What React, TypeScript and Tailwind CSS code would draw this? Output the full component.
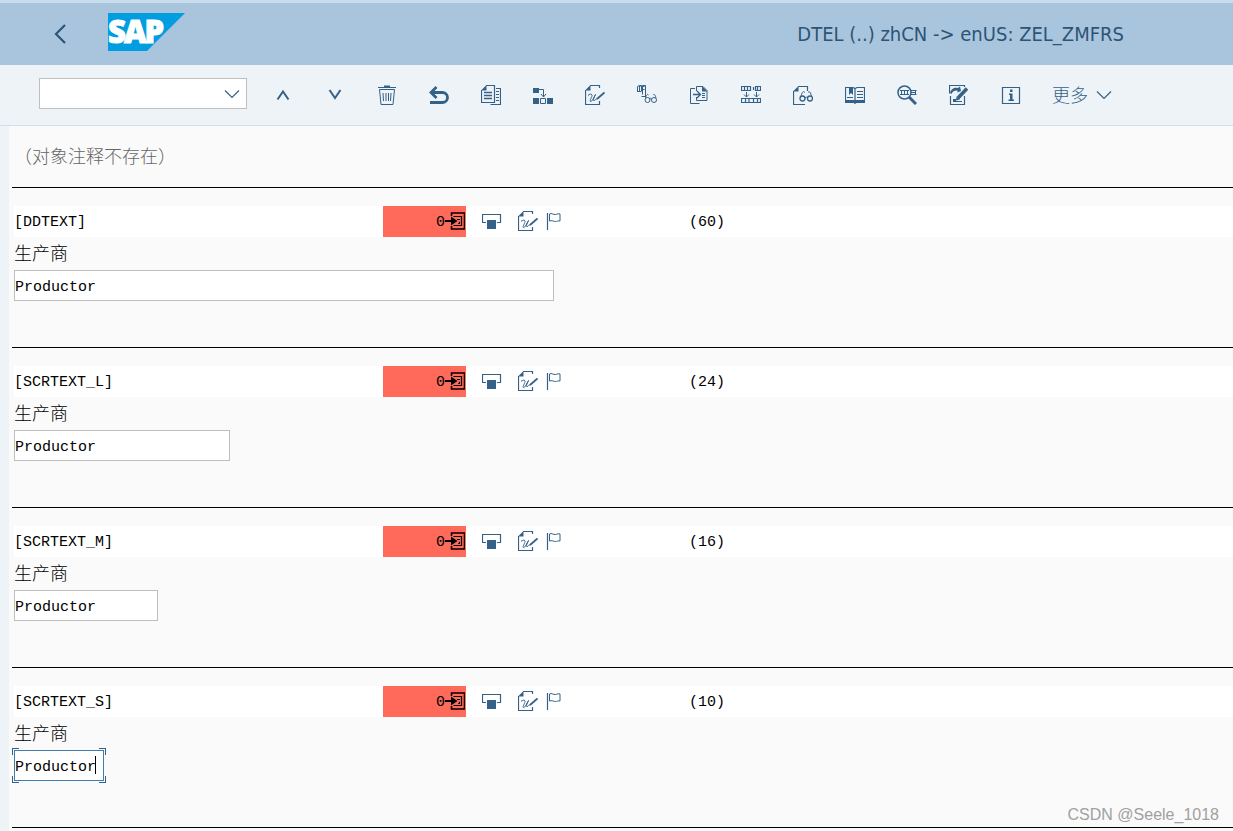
import { useState, type ReactNode } from "react"
import clsx from "clsx"

type IconProps = { className?: string }

function Svg({ children, className }: { children: ReactNode; className?: string }) {
  return (
    <svg
      viewBox="0 0 20 20"
      className={clsx("h-5 w-5 shrink-0", className)}
      fill="none"
      stroke="currentColor"
      strokeWidth="1"
      aria-hidden="true"
    >
      {children}
    </svg>
  )
}

const UpIcon = () => (
  <Svg>
    <path d="M4.5 14.5 10 6.5l5.5 8" strokeWidth="2" />
  </Svg>
)

const DownIcon = () => (
  <Svg>
    <path d="M4.5 5 10 13l5.5-8" strokeWidth="2" />
  </Svg>
)

const TrashIcon = () => (
  <Svg>
    <path d="M7 2V.5h6V2z" fill="currentColor" stroke="none" />
    <path d="M1 2.5h18M2.5 4.5h15L16 19.5H4z" />
    <path d="m6 8 .5 8M9 8v8M11.5 8v8M14 8l-.5 8" />
  </Svg>
)

const UndoIcon = () => (
  <Svg>
    <path d="M7.5 2 2 7.5 7.500 13M3 7.500h10.500a5 5 0 0 1 0 10H1" strokeWidth="2.800" />
  </Svg>
)

const CopyIcon = () => (
  <Svg>
    <path d="M5 .5h8.500v17H.5V5" strokeWidth="1.200" />
    <path d="M0 5.500 5.500 0v5.500z" fill="currentColor" stroke="none" />
    <path d="M3 7.500h8M3 10.500h8M3 13.500h8" strokeWidth="1.300" />
    <path d="M15 3.500h4.500v16h-10M15 6.500h3M15 9.500h3M15 12.500h3M15 15.500h3" strokeWidth="1.200" />
  </Svg>
)

const HierarchyIcon = () => (
  <Svg>
    <path d="M0 3h6v5H0zM0 13h6v6H0zM14 13h6v6h-6z" fill="currentColor" stroke="none" />
    <path d="M7.500 13.500h5v5h-5zM6 4.500h4.500v7M8 9l2.500 3L13 9" />
  </Svg>
)

const SignDocIcon = ({ className }: IconProps) => (
  <Svg className={className}>
    <path d="M5 .5h9.500V3M.5 5v14.500h14V16" strokeWidth="1.200" />
    <path d="M0 5.500 5.500 0v5.500z" fill="currentColor" stroke="none" />
    <path d="M3 10.500c1.500-1.500 3.500-2 4-.5s-3 6-1.500 6.500S9 12 10.500 9.500C9 13 7.500 15.500 9 15.500s1.500-2 3-1.500" />
    <path d="m12 14 7.500-6.500" strokeWidth="1.800" />
  </Svg>
)

const CheckTextIcon = () => (
  <Svg>
    <path d="M.5 7V1.500l2-1v6M2.500.5h2v6M5.500 9.500v-9h3v11h-4M1 6.500h3M3.500 1.500h4M5.500 4.500h2M7 11.500h2" />
    <circle cx="10.500" cy="15" r="2.500" />
    <circle cx="17" cy="15" r="2.500" />
    <path d="M8.500 13c1-4 2-4 3-3M19 13c-1-4-2-4-3-3M12.500 14c1-1 1.500-1 2 0" />
  </Svg>
)

const ImportDocIcon = () => (
  <Svg>
    <path d="M7.500 6V1.500H14l4 4v10H12M7.500 12v3.500H12M6 3.500H1.500v15h9" />
    <path d="M13 1v5.500h5.500z" fill="currentColor" stroke="none" />
    <path d="M4 9.500h7.500M8 6l3.500 3.500L8 13" strokeWidth="1.300" />
    <path d="M13 8.500h3M13 10.500h3M13 12.500h3" />
  </Svg>
)

const SplitRowsIcon = () => (
  <Svg>
    <path d="M.5 1.500h9v4h-9zM14.500 1.500h5v4h-5zM3.500 2v3M6.500 2v3M16.500 2v3M12.500 2v3M.5 13.500h19v4H.5zM4.500 14v3M8 14v3M12.500 14v3M16.500 14v3" strokeWidth="1.200" />
    <path d="M5.500 7v5M3 9.500 5.500 12 8 9.500M15.500 7v5M13 9.500l2.500 2.500L18 9.500" />
  </Svg>
)

const DisplayDocIcon = () => (
  <Svg>
    <path d="M5 1.500h9.500V6M.5 6v13.500H12" strokeWidth="1.200" />
    <path d="M0 6.500 5.500 1v5.500z" fill="currentColor" stroke="none" />
    <circle cx="9.500" cy="13.500" r="2.500" strokeWidth="1.300" />
    <circle cx="17" cy="13.500" r="2.500" strokeWidth="1.300" />
    <path d="M8 11.500c1-5 2.500-5.500 4-4M18.500 11.500c-1-5-2-5.500-3.500-4M12 13c1-1 1.500-1 2.500 0" />
  </Svg>
)

const BookIcon = () => (
  <Svg>
    <path d="M.5 2.500H8l2 1 2-1h7.500v13H.5zM10 3v13" strokeWidth="1.200" />
    <path d="M0 15h20v3h-8.500l-1.500 1-1.500-1H0z" fill="currentColor" stroke="none" />
    <path d="M4 2h4v8L6 8l-2 2z" fill="currentColor" stroke="none" />
    <path d="M12 6.500h6M12 9.500h6M12 12.500h6M2 12.500h6" />
  </Svg>
)

const SearchTermIcon = () => (
  <Svg>
    <circle cx="7.500" cy="7.500" r="6.500" strokeWidth="1.500" />
    <path d="m12 12 7 7" strokeWidth="3" />
    <path d="M3 5.500h9M3 9.500h9M4.500 6v3M7.500 6v3M10.500 6v3M14 5.500h5.500M14 9.500h5.500M14 7.500h4M18.500 6v3" />
  </Svg>
)

const EditNoteIcon = () => (
  <Svg>
    <path d="M3 .5h12.500V2M1.500 11v8.500h14V11M.5 8.500V.5H3" strokeWidth="1.200" />
    <path d="M1 8c1-4 4-6 8-5l2-1.500L12 6 8.500 7.500V5.500C5.500 5 3 7 2.500 9z" fill="currentColor" stroke="none" />
    <path d="m9 13 9-9.500" strokeWidth="3.500" />
    <path d="m7 15.500.5-4 3.500 3zM4 14h3v3H4z" fill="currentColor" stroke="none" />
    <path d="M4 16.500h9" />
  </Svg>
)

const InfoIcon = () => (
  <Svg>
    <path d="M1.500 2.500h17v16h-17z" strokeWidth="1.200" />
    <path d="M9 4.500h2.500V7H9zM8 8.500h3.500v6H13V16H7.500v-1.500H9V10H8z" fill="currentColor" stroke="none" />
  </Svg>
)

const ChevronIcon = ({ className }: IconProps) => (
  <svg
    viewBox="0 0 16 10"
    className={clsx("h-[10px] w-4 shrink-0", className)}
    fill="none"
    stroke="currentColor"
    strokeWidth="1.200"
    aria-hidden="true"
  >
    <path d="m1 1.500 7 7 7-7" />
  </svg>
)

const EnterIcon = () => (
  <Svg>
    <path d="M6.500 5V2h13v16h-13v-3" strokeWidth="1.600" />
    <path d="M8.500 5.500h8v9h-8M12 8.500h3" strokeWidth="1.200" />
    <path d="M0 9h6V5.500l6.500 4.500L6 14.500V11H0zM15 10v3h-2z" fill="currentColor" stroke="none" />
  </Svg>
)

const ProposalIcon = () => (
  <Svg>
    <path d="M4 11.500H.5v-8h18v8H15" strokeWidth="1.200" />
    <path d="M5 9h9v9H5z" fill="currentColor" stroke="none" />
  </Svg>
)

const FlagIcon = () => (
  <Svg>
    <path d="M1.500 2v17" strokeWidth="1.200" />
    <path d="M3.500 3c2-1.500 4 1 6 .5s3-1 4.500-.5v7c-2-.5-3 .5-4.500.5s-4-1.500-6-.5z" />
  </Svg>
)

const tools = [
  { name: "Previous", Icon: UpIcon },
  { name: "Next", Icon: DownIcon },
  { name: "Delete", Icon: TrashIcon },
  { name: "Undo", Icon: UndoIcon },
  { name: "Copy", Icon: CopyIcon },
  { name: "Hierarchy", Icon: HierarchyIcon },
  { name: "Edit text", Icon: SignDocIcon },
  { name: "Check text", Icon: CheckTextIcon },
  { name: "Import", Icon: ImportDocIcon },
  { name: "Split rows", Icon: SplitRowsIcon },
  { name: "Display document", Icon: DisplayDocIcon },
  { name: "Glossary", Icon: BookIcon },
  { name: "Search term", Icon: SearchTermIcon },
  { name: "Edit note", Icon: EditNoteIcon },
  { name: "Information", Icon: InfoIcon },
]

const fields = [
  { key: "DDTEXT", source: "生产商", target: "Productor", max: 60 },
  { key: "SCRTEXT_L", source: "生产商", target: "Productor", max: 24 },
  { key: "SCRTEXT_M", source: "生产商", target: "Productor", max: 16 },
  { key: "SCRTEXT_S", source: "生产商", target: "Productor", max: 10, active: true },
]

const CHAR_WIDTH = 9

function Header() {
  return (
    <header className="flex h-[65px] items-start border-t-[3px] border-[#c9dcec] bg-[#a9c5de] pt-[10px] text-[#2d5475]">
      <button type="button" aria-label="Back" className="ml-[50px] flex h-[42px] w-5 items-center justify-center">
        <Svg>
          <path d="M15 1 6 10l9 9" strokeWidth="2.200" />
        </Svg>
      </button>
      <svg
        viewBox="0 0 77 38"
        className="ml-[38px] h-[38px] w-[77px] shrink-0 overflow-visible"
        role="img"
        aria-label="SAP"
      >
        <path d="M0 0h77L39 38H0z" fill="#009de0" />
        <text
          x="0"
          y="30"
          fill="#fff"
          stroke="#fff"
          strokeWidth="1"
          className="font-['Open_Sans',sans-serif] text-[31px] font-extrabold tracking-[-2px]"
        >
          SAP
        </text>
      </svg>
      <h1 className="mr-[109px] ml-auto font-['DejaVu_Sans_Condensed','Noto_Sans',sans-serif] text-[20px] leading-[42px] whitespace-nowrap">
        DTEL (..) zhCN -&gt; enUS: ZEL_ZMFRS
      </h1>
    </header>
  )
}

function Toolbar() {
  return (
    <div className="flex h-[61px] items-start border-b border-[#cfdfeb] bg-[#eef3f8] pt-[13px] pl-[39px] text-[#346187]">
      <div className="flex h-[31px] w-[208px] items-center border border-[#bfbfbf] bg-white">
        <input type="text" aria-label="Command" className="h-full min-w-0 flex-1 px-2 outline-none" />
        <button type="button" aria-label="Open command list" className="flex h-full w-7 items-center justify-center">
          <ChevronIcon />
        </button>
      </div>
      <div className="ml-[10px] flex">
        {tools.map(({ name, Icon }) => (
          <button key={name} type="button" aria-label={name} className="flex h-[34px] w-[52px] items-center justify-center">
            <Icon />
          </button>
        ))}
      </div>
      <button type="button" className="ml-[15px] flex h-[34px] items-center gap-2 text-[18px] font-light whitespace-nowrap">
        <span className="pt-1">更多</span>
        <ChevronIcon />
      </button>
    </div>
  )
}

// Corner brackets drawn just outside the active text box
function FocusCorners() {
  const corner = "pointer-events-none absolute h-[7px] w-[7px] border-[#346187]"
  return (
    <>
      <span className={clsx(corner, "-top-[2px] -left-[2px] border-t border-l")} />
      <span className={clsx(corner, "-top-[2px] -right-[2px] border-t border-r")} />
      <span className={clsx(corner, "-bottom-[2px] -left-[2px] border-b border-l")} />
      <span className={clsx(corner, "-right-[2px] -bottom-[2px] border-r border-b")} />
    </>
  )
}

function TextField({ field }: { field: (typeof fields)[number] }) {
  const [value, setValue] = useState(field.target)

  return (
    <section className="border-t border-black pt-[18px] pb-[46px]">
      <div className="ml-[2px] flex h-[31px] items-start bg-white leading-[33px]">
        <label htmlFor={field.key} className="w-[369px] shrink-0">
          [{field.key}]
        </label>
        <div className="flex h-full w-[83px] shrink-0 items-start justify-end bg-[#ff6a5a] pr-px">
          0
          <button type="button" aria-label="Go to proposals" className="flex h-[30px] items-center">
            <EnterIcon />
          </button>
        </div>
        <div className="flex h-[30px] w-[223px] shrink-0 items-center pl-4 text-[#346187]">
          <button type="button" aria-label="Proposal">
            <ProposalIcon />
          </button>
          <button type="button" aria-label="Edit" className="ml-4">
            <SignDocIcon />
          </button>
          <button type="button" aria-label="Flag" className="ml-2">
            <FlagIcon />
          </button>
        </div>
        <span>({field.max})</span>
      </div>
      <p className="ml-[2px] flex h-[33px] items-center pt-1 text-[18px] font-light">{field.source}</p>
      <div className="relative ml-[2px] h-[31px]" style={{ width: field.max * CHAR_WIDTH }}>
        <input
          id={field.key}
          type="text"
          value={value}
          maxLength={field.max}
          onChange={(e) => setValue(e.target.value)}
          className={clsx(
            "h-full w-full border bg-white pt-1 outline-none",
            field.active ? "border-[#3f7cae]" : "border-[#bfbfbf]"
          )}
        />
        {field.active && (
          <>
            <FocusCorners />
            <span className="pointer-events-none absolute top-[6px] left-[81px] h-[18px] w-px bg-black" />
          </>
        )}
      </div>
    </section>
  )
}

export default function App() {
  return (
    <div className="relative min-h-screen bg-[#eef3f8] font-['Liberation_Mono','Noto_Sans_CJK_SC',monospace] text-[15px] text-black">
      <Header />
      <Toolbar />
      <main className="ml-[9px] min-h-[calc(100vh-126px)] bg-[#fafafa] pl-[3px]">
        <p className="ml-[2px] flex h-[61px] items-center pt-1 text-[18px] font-light text-[#666]">
          （对象注释不存在）
        </p>
        {fields.map((field) => (
          <TextField key={field.key} field={field} />
        ))}
        <hr className="border-black" />
      </main>
      <p className="absolute right-[14px] bottom-1 font-['Liberation_Sans',sans-serif] text-[16px] text-[#a0a0a0]">
        CSDN @Seele_1018
      </p>
    </div>
  )
}
